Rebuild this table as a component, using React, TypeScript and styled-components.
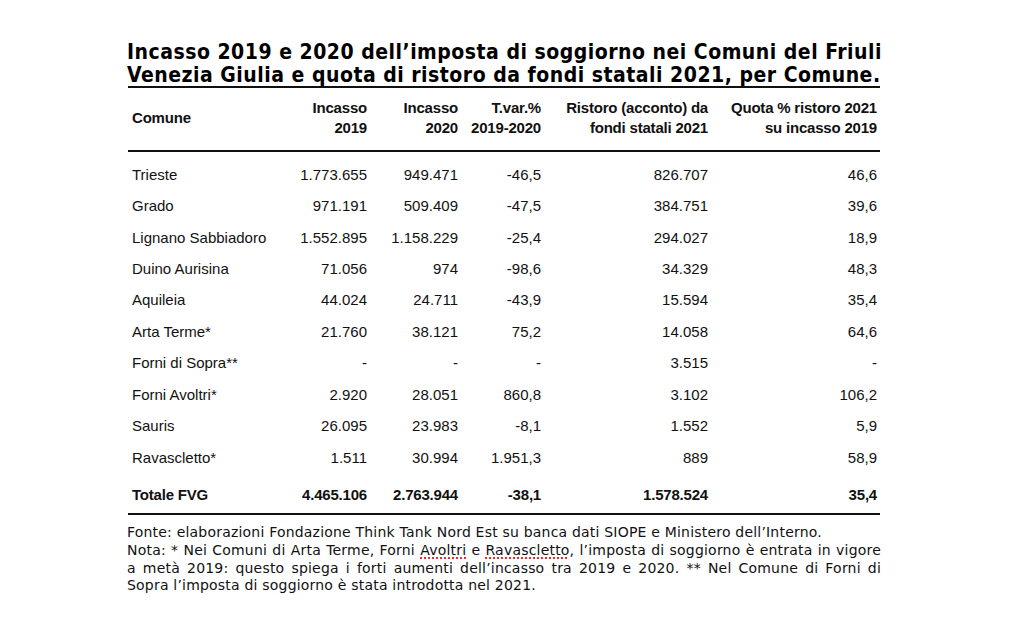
import React from "react";
import styled, { createGlobalStyle } from "styled-components";

const Global = createGlobalStyle`
  html, body { margin: 0; padding: 0; background: #ffffff; }
  body { width: 1024px; height: 633px; overflow: hidden; }
`;

const Page = styled.div`
  width: 1024px;
  height: 633px;
  background: #fff;
  padding: 41px 0 0 127px;
  box-sizing: border-box;
`;

const Sheet = styled.div`
  width: 754px;
  display: flex;
  flex-direction: column;
`;

const Title = styled.h1`
  margin: 0;
  font-family: Tahoma, "DejaVu Sans Condensed", "DejaVu Sans", sans-serif;
  font-weight: bold;
  font-size: 21px;
  line-height: 22.5px;
  color: #000;
  white-space: nowrap;
  letter-spacing: 0.5px;
`;

const Table = styled.div`
  margin-left: 1px;
  width: 752px;
  border-top: 2px solid #111;
  font-family: "Liberation Sans", Arial, sans-serif;
  color: #111;
`;

const COLS = "152px 87px 91px 83px 167px 172px";

const HeadRow = styled.div`
  display: grid;
  grid-template-columns: ${COLS};
  padding: 10px 0 12px;
  border-bottom: 2px solid #111;
  font-weight: bold;
  font-size: 15px;
  line-height: 20px;
  letter-spacing: -0.2px;
`;

const BodyRows = styled.div`
  padding-top: 6.5px;
  display: flex;
  flex-direction: column;
`;

const Row = styled.div<{ $total?: boolean }>`
  display: grid;
  grid-template-columns: ${COLS};
  height: 31.45px;
  align-items: center;
  font-size: 15px;
  font-weight: ${(p) => (p.$total ? "bold" : "normal")};
  letter-spacing: ${(p) => (p.$total ? "-0.2px" : "0")};
`;

const TotalWrap = styled.div`
  padding: 6px 0 3px;
  border-bottom: 2px solid #111;
`;

const Cell = styled.div<{ $left?: boolean; $last?: boolean }>`
  text-align: ${(p) => (p.$left ? "left" : "right")};
  padding-left: ${(p) => (p.$left ? "4px" : "0")};
  padding-right: ${(p) => (p.$last ? "3px" : "0")};
  white-space: nowrap;
  align-self: center;
`;

const Notes = styled.div`
  margin-top: 9px;
  font-family: Tahoma, "DejaVu Sans", sans-serif;
  font-size: 14px;
  line-height: 17.6px;
  letter-spacing: 0.2px;
  color: #111;
  width: 754px;
`;

const NoteLine = styled.div<{ $justify?: boolean }>`
  text-align: ${(p) => (p.$justify ? "justify" : "left")};
  text-align-last: ${(p) => (p.$justify ? "justify" : "left")};
  white-space: ${(p) => (p.$justify ? "normal" : "nowrap")};
`;

const Spell = styled.span`
  text-decoration: underline dotted #e03030;
  text-decoration-thickness: 2px;
  text-underline-offset: 3px;
`;

type R = [string, string, string, string, string, string];

const rows: R[] = [
  ["Trieste", "1.773.655", "949.471", "-46,5", "826.707", "46,6"],
  ["Grado", "971.191", "509.409", "-47,5", "384.751", "39,6"],
  ["Lignano Sabbiadoro", "1.552.895", "1.158.229", "-25,4", "294.027", "18,9"],
  ["Duino Aurisina", "71.056", "974", "-98,6", "34.329", "48,3"],
  ["Aquileia", "44.024", "24.711", "-43,9", "15.594", "35,4"],
  ["Arta Terme*", "21.760", "38.121", "75,2", "14.058", "64,6"],
  ["Forni di Sopra**", "-", "-", "-", "3.515", "-"],
  ["Forni Avoltri*", "2.920", "28.051", "860,8", "3.102", "106,2"],
  ["Sauris", "26.095", "23.983", "-8,1", "1.552", "5,9"],
  ["Ravascletto*", "1.511", "30.994", "1.951,3", "889", "58,9"],
];

const total: R = ["Totale FVG", "4.465.106", "2.763.944", "-38,1", "1.578.524", "35,4"];

const renderCells = (r: R) =>
  r.map((v, i) => (
    <Cell key={i} $left={i === 0} $last={i === 5}>
      {v}
    </Cell>
  ));

export default function App() {
  return (
    <>
      <Global />
      <Page>
        <Sheet>
          <Title>
            Incasso 2019 e 2020 dell’imposta di soggiorno nei Comuni del Friuli
            <br />
            Venezia Giulia e quota di ristoro da fondi statali 2021, per Comune.
          </Title>
          <Table>
            <HeadRow>
              <Cell $left>Comune</Cell>
              <Cell>Incasso<br />2019</Cell>
              <Cell>Incasso<br />2020</Cell>
              <Cell>T.var.%<br />2019-2020</Cell>
              <Cell>Ristoro (acconto) da<br />fondi statali 2021</Cell>
              <Cell $last>Quota % ristoro 2021<br />su incasso 2019</Cell>
            </HeadRow>
            <BodyRows>
              {rows.map((r) => (
                <Row key={r[0]}>{renderCells(r)}</Row>
              ))}
            </BodyRows>
            <TotalWrap>
              <Row $total>{renderCells(total)}</Row>
            </TotalWrap>
          </Table>
          <Notes>
            <NoteLine>
              Fonte: elaborazioni Fondazione Think Tank Nord Est su banca dati SIOPE e Ministero dell’Interno.
            </NoteLine>
            <NoteLine $justify>
              Nota: * Nei Comuni di Arta Terme, Forni <Spell>Avoltri</Spell> e <Spell>Ravascletto</Spell>, l’imposta di soggiorno è entrata in vigore
            </NoteLine>
            <NoteLine $justify>
              a metà 2019: questo spiega i forti aumenti dell’incasso tra 2019 e 2020. ** Nel Comune di Forni di
            </NoteLine>
            <NoteLine>Sopra l’imposta di soggiorno è stata introdotta nel 2021.</NoteLine>
          </Notes>
        </Sheet>
      </Page>
    </>
  );
}
